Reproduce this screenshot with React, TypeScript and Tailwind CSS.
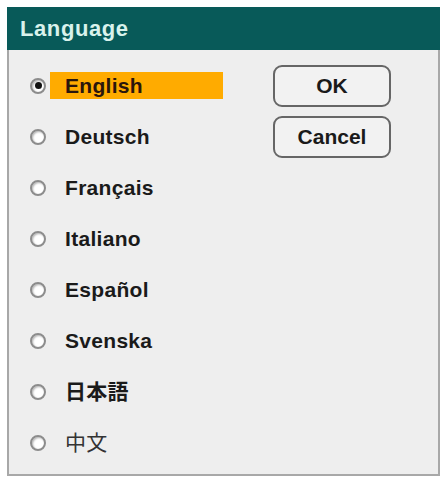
const LANGUAGES = [
  "English",
  "Deutsch",
  "Français",
  "Italiano",
  "Español",
  "Svenska",
  "日本語",
  "中文",
]

const FONT = "font-['Liberation_Sans','Noto_Sans_CJK_JP',sans-serif]"

function Radio({ checked }: { checked: boolean }) {
  return (
    <span className="flex h-[16px] w-[16px] shrink-0 items-center justify-center rounded-full border-[2.5px] border-[#8c8c8c] bg-white shadow-[inset_1px_1px_2px_rgba(0,0,0,0.3)]">
      {checked && <span className="h-[7px] w-[7px] rounded-full bg-[#111]" />}
    </span>
  )
}

function LanguageRow({ label, selected }: { label: string; selected: boolean }) {
  const light = label === "中文"
  return (
    <div className="flex h-[51px] items-center gap-[4px]">
      <Radio checked={selected} />
      <div
        className={`flex h-[27px] w-[173px] items-center pl-[15px] text-[21px] tracking-[0.3px] ${
          light ? "font-normal text-[#333]" : "font-bold text-[#1a1a1a]"
        } ${selected ? "bg-[#ffab00] text-[#2a160c]" : ""}`}
      >
        {label}
      </div>
    </div>
  )
}

function DialogButton({ children }: { children: string }) {
  return (
    <button className="flex h-[42px] w-[118px] items-center justify-center rounded-[9px] border-2 border-[#666] bg-[#f2f2f2] text-[21px] font-bold text-[#1a1a1a]">
      {children}
    </button>
  )
}

export default function App() {
  return (
    <div className={`h-[479px] w-[443px] bg-white pl-[7px] pt-[7px] ${FONT}`}>
      <div className="flex h-[469px] w-[433px] flex-col">
        <div className="flex h-[43px] items-center bg-[#085a59] pl-[13px] text-[22px] font-bold tracking-[0.6px] text-[#d9f2ec]">
          Language
        </div>
        <div className="flex flex-1 border-x-2 border-b-2 border-[#a8a8a8] bg-[#eeeeee] pl-[21px] pt-[10px]">
          <div className="flex flex-col">
            {LANGUAGES.map((lang, i) => (
              <LanguageRow key={lang} label={lang} selected={i === 0} />
            ))}
          </div>
          <div className="ml-[50px] flex flex-col gap-[9px] pt-[5px]">
            <DialogButton>OK</DialogButton>
            <DialogButton>Cancel</DialogButton>
          </div>
        </div>
      </div>
    </div>
  )
}
